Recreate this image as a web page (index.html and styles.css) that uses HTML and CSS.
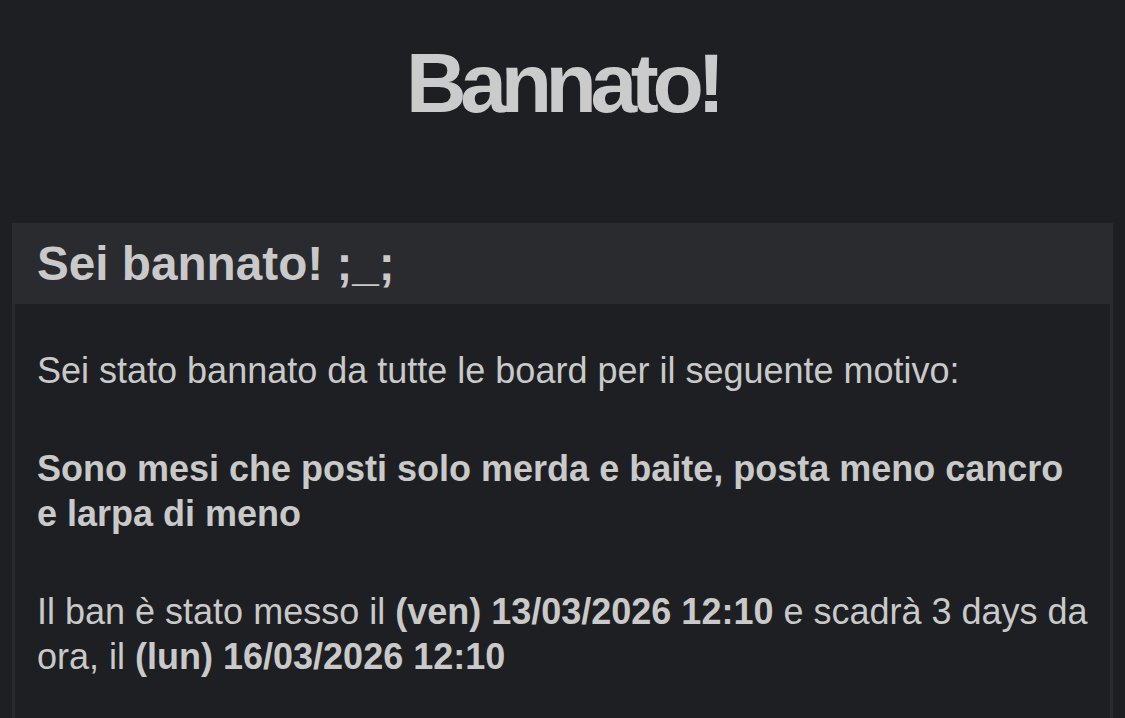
FILE: index.html
```html
<!DOCTYPE html>
<html lang="it">
<head>
<meta charset="utf-8">
<title>Bannato!</title>
<link rel="stylesheet" href="styles.css">
</head>
<body>
<h1 class="title">Bannato!</h1>
<section class="box">
  <h2 class="box-head">Sei bannato! ;_;</h2>
  <div class="box-body">
    <p class="para">Sei stato bannato da tutte le board per il seguente motivo:</p>
    <p class="para reason">Sono mesi che posti solo merda e baite, posta meno cancro e larpa di meno</p>
    <p class="para">Il ban è stato messo il <b>(ven) 13/03/2026 12:10</b> e scadrà 3 days da ora, il <b>(lun) 16/03/2026 12:10</b></p>
  </div>
</section>
</body>
</html>
```
FILE: styles.css
```css
html, body {
  margin: 0;
  padding: 0;
  background: #1e1f22;
  color: #c8c9c8;
  font-family: "Liberation Sans", Arial, sans-serif;
  overflow: hidden;
}
.title {
  margin: 41px 0 0 0;
  font-size: 84px;
  line-height: 84px;
  font-weight: bold;
  letter-spacing: -6.4px;
  text-align: center;
  color: #cacbca;
}
.box {
  margin: 98px 12px 0 12px;
  border: 3px solid #2a2b2f;
  border-top: 0;
  border-bottom: 0;
  height: 495px;
}
.box-head {
  margin: 0 -3px;
  background: #2a2b2f;
  padding: 17px 25px;
  font-size: 47.7px;
  line-height: 47px;
  font-weight: bold;
}
.box-body {
  padding: 44px 22px 0 22px;
}
.para {
  margin: 0 0 53px 0;
  font-size: 36px;
  line-height: 45px;
}
.reason, .para b {
  font-weight: bold;
}
```
